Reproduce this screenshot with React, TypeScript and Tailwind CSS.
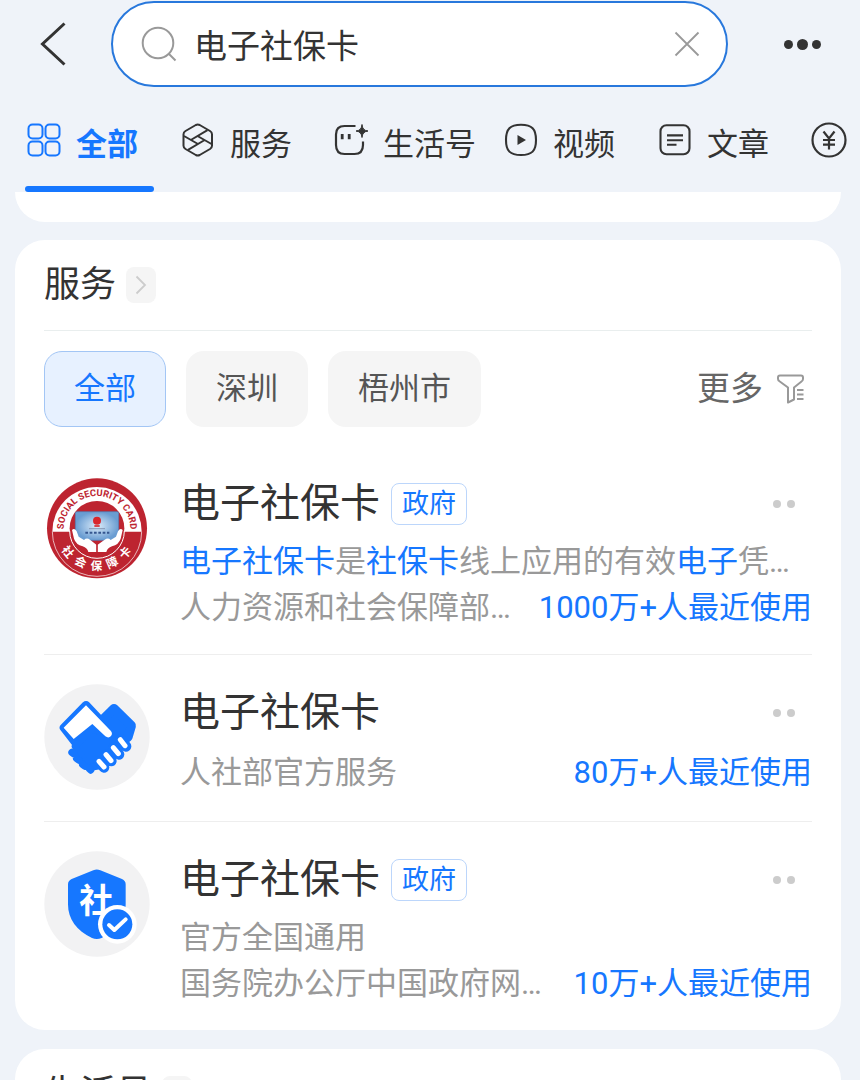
import { useState, type ReactNode } from "react"

type Part = { text: string; hit?: boolean }

type Service = {
  id: string
  title: string
  official?: boolean
  description?: Part[]
  provider: string
  usage: string
  logo: ReactNode
}

function GridIcon() {
  return (
    <svg viewBox="0 0 34 34" className="size-[34px]" fill="none" stroke="currentColor" strokeWidth="2">
      <rect x="1.5" y="1.5" width="14" height="14" rx="4" />
      <rect x="18.5" y="1.5" width="14" height="14" rx="4" />
      <rect x="1.5" y="18.5" width="14" height="14" rx="4" />
      <rect x="18.5" y="18.5" width="14" height="14" rx="4" />
    </svg>
  )
}

function ServiceIcon() {
  return (
    <svg viewBox="0 0 34 34" className="size-[34px]" fill="none" stroke="currentColor" strokeWidth="2" strokeLinejoin="round">
      <path d="M14.8 2 Q16.8 1 18.7 2 L29 8 Q31 9.3 31 11.2 V22.8 Q31 24.7 29 26 L18.7 32 Q16.8 33 14.8 32 L4.5 26 Q2.5 24.7 2.5 22.8 V11.2 Q2.5 9.3 4.5 8 Z" />
      <path d="M3 13 L17 21 M9.8 17 L26.5 7.2" />
      <path d="M30.5 21 L16.5 13 M23.7 17 L7 26.8" />
    </svg>
  )
}

function LifeIcon() {
  return (
    <svg viewBox="0 0 34 34" className="size-[34px] overflow-visible" fill="none" stroke="currentColor" strokeWidth="2.2">
      <path d="M21.5 3 H10.5 Q2 3 2 11.5 V22 Q2 31 10.5 31 H20.5 Q29 31 29 22 V18.5" />
      <path d="M8.2 11 V16.2 M15.2 11 V16.2" strokeWidth="2.8" />
      <path d="M28 1.5 Q28.3 7.5 34 8 Q28.3 8.6 28 14.5 Q27.7 8.6 22 8 Q27.7 7.5 28 1.5 Z" fill="currentColor" strokeWidth="1" />
    </svg>
  )
}

function VideoIcon() {
  return (
    <svg viewBox="0 0 34 34" className="size-[34px]" fill="none" stroke="currentColor" strokeWidth="2.1">
      <path d="M17 1.8 C28 1.8 32 6 32 17 C32 28 28 32 17 32 C6 32 2 28 2 17 C2 6 6 1.8 17 1.8 Z" />
      <path d="M13.5 12 L22 17 L13.5 22 Z" fill="currentColor" stroke="none" />
    </svg>
  )
}

function ArticleIcon() {
  return (
    <svg viewBox="0 0 34 34" className="size-[34px]" fill="none" stroke="currentColor" strokeWidth="2.1">
      <rect x="2.5" y="2.3" width="29" height="29" rx="6" />
      <path d="M9 12.4 H25 M9 17.2 H25 M9 21.8 H18.5" />
    </svg>
  )
}

function MoneyIcon() {
  return (
    <svg viewBox="0 0 36 36" className="size-9 shrink-0" fill="none" stroke="currentColor" strokeWidth="2.2">
      <circle cx="18" cy="18" r="16.5" />
      <path d="M12.5 9.5 L18 16.5 L23.5 9.5 M18 16.5 V27.5 M12 18 H24 M12 22.6 H24" />
    </svg>
  )
}

function FunnelIcon() {
  return (
    <svg viewBox="0 0 28 30" className="h-[30px] w-7" fill="none" stroke="#999999" strokeWidth="2" strokeLinejoin="round">
      <path d="M3 1.5 H24 Q26 1.5 26 3.5 V5 Q26 6.5 24.5 7.5 L17 13.5 V25.5 L11 28.5 V13.5 L2.8 7.5 Q1 6.5 1 5 V3.5 Q1 1.5 3 1.5 Z" />
      <path d="M20 16 H26.5 M20 20.5 H26.5 M20 25 H26.5" />
    </svg>
  )
}

const sealGlyphs = [
  { char: "社", angle: 51 },
  { char: "会", angle: 26 },
  { char: "保", angle: 1 },
  { char: "障", angle: -24 },
  { char: "卡", angle: -49 },
]

function SocialSecurityLogo() {
  return (
    <svg viewBox="42 45 318 318" className="size-[106px]">
      <defs>
        <path id="seal-arc" d="M102 222 A100 100 0 1 1 300 222" />
        <radialGradient id="card-fill">
          <stop offset="0" stopColor="#dcecfa" />
          <stop offset="1" stopColor="#6a9dd2" />
        </radialGradient>
      </defs>
      <circle cx="201" cy="205" r="150" fill="#bd2430" />
      <path d="M67 215 A134 134 0 1 1 335 215 Z" fill="#fff" />
      <path d="M67 215 A134 134 0 0 0 335 215" fill="none" stroke="#fff" strokeWidth="2" />
      <circle cx="201" cy="205" r="82" fill="#bd2430" />
      <path d="M119 213 A82 82 0 0 0 283 213" fill="none" stroke="#fff" strokeWidth="3" />
      <rect x="136" y="155" width="130" height="86" rx="5" fill="url(#card-fill)" stroke="#4f7fb8" strokeWidth="2" />
      <circle cx="201" cy="182" r="12" fill="#d9262c" />
      <path d="M193 198 H209" stroke="#d9262c" strokeWidth="5" />
      <path d="M178 206 H225" stroke="#6d7b99" strokeWidth="3" strokeDasharray="4 2" />
      <path d="M166 218 H238" stroke="#35568f" strokeWidth="6" strokeDasharray="8 5" />
      <path
        d="M126 210 Q133 202 140 214 L146 230 L162 240 Q170 232 180 239 L199 254 L199 276 H175 Q172 264 158 259 Q138 254 132 236 Z"
        fill="#fff"
      />
      <path
        d="M278 210 Q271 202 264 214 L258 230 L242 240 Q234 232 224 239 L203 254 L203 276 H229 Q232 264 246 259 Q266 254 272 236 Z"
        fill="#fff"
      />
      <path d="M201 250 V277" stroke="#bd2430" strokeWidth="3" />
      <text fill="#bd2430" className="font-['Roboto',sans-serif] text-[28px] font-bold" textAnchor="middle">
        <textPath href="#seal-arc" startOffset="50%">
          SOCIAL SECURITY CARD
        </textPath>
      </text>
      {sealGlyphs.map((glyph) => (
        <text
          key={glyph.char}
          x="201"
          y="330"
          fill="#fff"
          textAnchor="middle"
          transform={`rotate(${glyph.angle} 201 205)`}
          className="text-[35px] font-bold"
        >
          {glyph.char}
        </text>
      ))}
    </svg>
  )
}

function HandshakeLogo() {
  return (
    <svg viewBox="42 45 318 318" className="size-[106px]">
      <circle cx="201" cy="204" r="158" fill="#f2f2f3" />
      <g fill="#1677ff" stroke="#1677ff" strokeLinejoin="round" strokeLinecap="round">
        <path d="M168 109 L102 176 L138 222 L200 190 L240 185 Z" strokeWidth="26" />
        <path d="M252 119 L304 170 L294 204 L270 222 L214 156 Z" strokeWidth="28" />
        <path d="M135 232 L187 180 L240 200 L285 220 L214 290 L178 296 Z" strokeWidth="20" />
        <path d="M126 250 L132 255 M140 268 L146 273 M158 286 L164 291 M178 299 L182 303" strokeWidth="22" />
        <path d="M272 212 L288 232 M250 236 L267 256 M229 257 L244 276 M207 277 L222 295" strokeWidth="32" />
      </g>
      <path d="M168 109 L101 176 L131 210 L187 165 L226 202 Q236 209 243 201 Q249 193 242 185 Z" fill="#fff" />
      <path
        d="M271 212 L285 230 M250 236 L265 254 M228 257 L243 275 M207 277 L222 294"
        stroke="#fff"
        strokeWidth="15"
        strokeLinecap="round"
      />
    </svg>
  )
}

function ShieldLogo() {
  return (
    <svg viewBox="42 45 318 318" className="size-[106px]">
      <circle cx="201" cy="204" r="158" fill="#f2f2f3" />
      <path
        d="M190 103 Q200 98 211 103 L276 129 Q287 134 287 145 V205 C287 255 255 285 215 306 Q200 312 186 306 C140 284 114 250 114 205 V145 Q114 134 125 129 Z"
        fill="#1677ff"
      />
      <text x="199" y="231" textAnchor="middle" fill="#fff" className="text-[102px] font-bold">
        社
      </text>
      <circle cx="262" cy="265" r="58" fill="#fff" />
      <circle cx="262" cy="265" r="45" fill="#1677ff" />
      <path d="M237 267 L253 282 L287 250" fill="none" stroke="#fff" strokeWidth="12" strokeLinecap="round" strokeLinejoin="round" />
    </svg>
  )
}

const tabs = [
  { label: "全部", icon: <GridIcon />, slot: "w-[154px]" },
  { label: "服务", icon: <ServiceIcon />, slot: "w-[153px]" },
  { label: "生活号", icon: <LifeIcon />, slot: "w-[170px]" },
  { label: "视频", icon: <VideoIcon />, slot: "w-[154px]" },
  { label: "文章", icon: <ArticleIcon />, slot: "w-[153px]" },
]

const filters = ["全部", "深圳", "梧州市"]

const services: Service[] = [
  {
    id: "ssc",
    title: "电子社保卡",
    official: true,
    description: [
      { text: "电子社保卡", hit: true },
      { text: "是" },
      { text: "社保卡", hit: true },
      { text: "线上应用的有效" },
      { text: "电子", hit: true },
      { text: "凭…" },
    ],
    provider: "人力资源和社会保障部…",
    usage: "1000万+人最近使用",
    logo: <SocialSecurityLogo />,
  },
  {
    id: "mohrss",
    title: "电子社保卡",
    provider: "人社部官方服务",
    usage: "80万+人最近使用",
    logo: <HandshakeLogo />,
  },
  {
    id: "gov",
    title: "电子社保卡",
    official: true,
    description: [{ text: "官方全国通用" }],
    provider: "国务院办公厅中国政府网…",
    usage: "10万+人最近使用",
    logo: <ShieldLogo />,
  },
]

function SectionTitle({ children }: { children: ReactNode }) {
  return (
    <div className="flex h-[90px] items-center gap-[10px]">
      <h2 className="text-[36px] leading-[52px] text-[#333333]">{children}</h2>
      <button type="button" aria-label="查看全部" className="flex h-9 w-[30px] items-center justify-center rounded-lg bg-[#f5f5f5]">
        <svg viewBox="0 0 12 20" className="h-5 w-3" fill="none" stroke="#cccccc" strokeWidth="1.8">
          <path d="M1.5 1.5 L10 10 L1.5 18.5" />
        </svg>
      </button>
    </div>
  )
}

function ServiceRow({ service }: { service: Service }) {
  return (
    <li className="flex gap-[30px] border-b border-[#eeeeee] pb-[23px] last:border-b-0">
      <div className="shrink-0 pt-[29px]">{service.logo}</div>
      <div className="min-w-0 flex-1 pt-[29px]">
        <div className="mb-[6px] flex h-[58px] items-center">
          <a href="#" className="text-[40px] leading-[58px] text-[#333333]">
            {service.title}
          </a>
          {service.official ? (
            <span className="ml-[11px] rounded-lg border border-[#bcd6fb] px-[10px] text-[27px] leading-10 text-[#1677ff]">政府</span>
          ) : null}
          <button type="button" aria-label="更多操作" className="mr-[17px] ml-auto flex gap-[6px]">
            <span className="size-2 rounded-full bg-[#cccccc]" />
            <span className="size-2 rounded-full bg-[#cccccc]" />
          </button>
        </div>
        {service.description ? (
          <p className="truncate text-[31px] leading-[46px] text-[#999999]">
            {service.description.map((part) => (
              <span key={part.text} className={part.hit ? "text-[#1677ff]" : undefined}>
                {part.text}
              </span>
            ))}
          </p>
        ) : null}
        <div className={`flex justify-between text-[31px] ${service.description ? "leading-[46px]" : "leading-[50px]"}`}>
          <span className="truncate text-[#999999]">{service.provider}</span>
          <span className="shrink-0 text-[#1677ff]">{service.usage}</span>
        </div>
      </div>
    </li>
  )
}

export default function App() {
  const [query, setQuery] = useState("电子社保卡")
  const [activeTab, setActiveTab] = useState("全部")
  const [activeFilter, setActiveFilter] = useState("全部")

  return (
    <div className="flex h-screen flex-col overflow-hidden bg-[#eff3f9] font-['Roboto','Noto_Sans_CJK_SC',sans-serif] text-[#333333]">
      <header className="shrink-0">
        <div className="flex items-center pt-px pr-[39px] pl-[39px]">
          <button type="button" aria-label="返回" className="mr-[44px]">
            <svg viewBox="0 0 28 44" className="h-11 w-7" fill="none" stroke="#333333" strokeWidth="3">
              <path d="M25.5 1.5 L3.5 22 L25.5 42.5" />
            </svg>
          </button>
          <div className="flex h-[86px] min-w-0 flex-1 items-center rounded-full border-2 border-[#2878dc] bg-white pr-[26px] pl-7">
            <svg viewBox="0 0 36 36" className="size-9 shrink-0" fill="none" stroke="#999999" strokeWidth="2">
              <circle cx="17" cy="17" r="15.3" />
              <path d="M28 28 L34.5 34.5" />
            </svg>
            <input
              aria-label="搜索"
              value={query}
              onChange={(event) => setQuery(event.target.value)}
              className="ml-[17px] h-[60px] min-w-0 flex-1 bg-transparent text-[33px] outline-none"
            />
            <button type="button" aria-label="清除" onClick={() => setQuery("")}>
              <svg viewBox="0 0 26 26" className="size-[26px]" fill="none" stroke="#999999" strokeWidth="1.8">
                <path d="M1.5 1.5 L24.5 24.5 M24.5 1.5 L1.5 24.5" />
              </svg>
            </button>
          </div>
          <button type="button" aria-label="菜单" className="ml-14 flex items-center gap-1">
            <span className="size-[9px] rounded-full bg-[#333333]" />
            <span className="size-[11px] rounded-full bg-[#333333]" />
            <span className="size-[9px] rounded-full bg-[#333333]" />
          </button>
        </div>

        <nav className="flex h-[105px] overflow-hidden pl-[27px]">
          {tabs.map((tab) => (
            <button
              key={tab.label}
              type="button"
              onClick={() => setActiveTab(tab.label)}
              className={`relative flex shrink-0 items-start pt-9 ${tab.slot} ${activeTab === tab.label ? "font-bold text-[#1677ff]" : ""}`}
            >
              {tab.icon}
              <span className="ml-[15px] text-[31px] leading-[44px]">{tab.label}</span>
              {activeTab === tab.label ? (
                <span className="absolute bottom-0 -left-[2px] h-[6px] w-[129px] rounded-full bg-[#1677ff]" />
              ) : null}
            </button>
          ))}
          <button type="button" aria-label="理财" className="flex shrink-0 items-start pt-[35px]">
            <MoneyIcon />
          </button>
        </nav>
      </header>

      <main className="min-h-0 flex-1 overflow-hidden pr-[19px] pl-[15px]">
        <div className="h-[30px] rounded-b-[30px] bg-white" />

        <section className="mt-[18px] rounded-[30px] bg-white px-[29px]">
          <SectionTitle>服务</SectionTitle>
          <div className="flex items-center gap-5 border-t border-[#e9eeee] pt-5">
            {filters.map((filter) => (
              <button
                key={filter}
                type="button"
                onClick={() => setActiveFilter(filter)}
                className={`h-[76px] rounded-[18px] border px-[29px] text-[31px] ${
                  activeFilter === filter ? "border-[#a3c6f5] bg-[#e7f1ff] text-[#1677ff]" : "border-transparent bg-[#f5f5f5] text-[#555555]"
                }`}
              >
                {filter}
              </button>
            ))}
            <button type="button" className="mr-[7px] ml-auto flex items-center gap-[14px] text-[33px] text-[#666666]">
              更多
              <FunnelIcon />
            </button>
          </div>
          <ul className="mt-[19px]">
            {services.map((service) => (
              <ServiceRow key={service.id} service={service} />
            ))}
          </ul>
        </section>

        <section className="mt-[19px] rounded-t-[30px] bg-white px-[29px]">
          <SectionTitle>生活号</SectionTitle>
        </section>
      </main>
    </div>
  )
}
